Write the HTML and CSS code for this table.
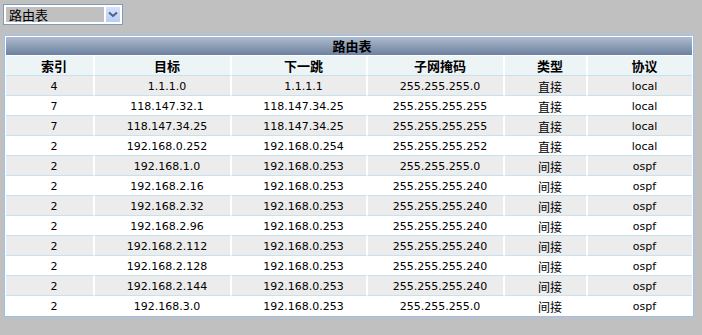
FILE: index.html
```html
<!DOCTYPE html>
<html lang="zh-CN">
<head>
<meta charset="utf-8">
<title>路由表</title>
<link rel="stylesheet" href="styles.css">
</head>
<body>
<div class="select">
  <span class="select-value">路由表</span>
  <span class="select-btn">
    <svg width="10" height="7" viewBox="0 0 10 7"><path d="M1 1.5 L5 5 L9 1.5" fill="none" stroke="#4d6185" stroke-width="2"/></svg>
  </span>
</div>
<div class="panel">
  <table class="routes">
    <colgroup>
      <col class="c1"><col class="c2"><col class="c3"><col class="c4"><col class="c5"><col class="c6">
    </colgroup>
    <thead>
      <tr><th colspan="6" class="title">路由表</th></tr>
      <tr class="cols"><th>索引</th><th>目标</th><th>下一跳</th><th>子网掩码</th><th>类型</th><th>协议</th></tr>
    </thead>
    <tbody>
      <tr><td>4</td><td>1.1.1.0</td><td>1.1.1.1</td><td>255.255.255.0</td><td class="zh">直接</td><td>local</td></tr>
      <tr><td>7</td><td>118.147.32.1</td><td>118.147.34.25</td><td>255.255.255.255</td><td class="zh">直接</td><td>local</td></tr>
      <tr><td>7</td><td>118.147.34.25</td><td>118.147.34.25</td><td>255.255.255.255</td><td class="zh">直接</td><td>local</td></tr>
      <tr><td>2</td><td>192.168.0.252</td><td>192.168.0.254</td><td>255.255.255.252</td><td class="zh">直接</td><td>local</td></tr>
      <tr><td>2</td><td>192.168.1.0</td><td>192.168.0.253</td><td>255.255.255.0</td><td class="zh">间接</td><td>ospf</td></tr>
      <tr><td>2</td><td>192.168.2.16</td><td>192.168.0.253</td><td>255.255.255.240</td><td class="zh">间接</td><td>ospf</td></tr>
      <tr><td>2</td><td>192.168.2.32</td><td>192.168.0.253</td><td>255.255.255.240</td><td class="zh">间接</td><td>ospf</td></tr>
      <tr><td>2</td><td>192.168.2.96</td><td>192.168.0.253</td><td>255.255.255.240</td><td class="zh">间接</td><td>ospf</td></tr>
      <tr><td>2</td><td>192.168.2.112</td><td>192.168.0.253</td><td>255.255.255.240</td><td class="zh">间接</td><td>ospf</td></tr>
      <tr><td>2</td><td>192.168.2.128</td><td>192.168.0.253</td><td>255.255.255.240</td><td class="zh">间接</td><td>ospf</td></tr>
      <tr><td>2</td><td>192.168.2.144</td><td>192.168.0.253</td><td>255.255.255.240</td><td class="zh">间接</td><td>ospf</td></tr>
      <tr><td>2</td><td>192.168.3.0</td><td>192.168.0.253</td><td>255.255.255.0</td><td class="zh">间接</td><td>ospf</td></tr>
    </tbody>
  </table>
</div>
</body>
</html>
```
FILE: styles.css
```css
html, body {
  margin: 0;
  background: #c0c0c0;
}
body {
  padding: 4px 0 0 3px;
  font-family: "DejaVu Sans", "Noto Sans CJK SC", sans-serif;
  font-size: 11px;
  color: #000;
}
.select {
  box-sizing: border-box;
  width: 120px;
  height: 21px;
  border: 1px solid #7f9db9;
  background: #fff;
  padding: 2px;
  display: flex;
  gap: 2px;
}
.select-value {
  flex: 1;
  background: #c0c0c0;
  font-family: "Noto Sans CJK SC", sans-serif;
  font-size: 13px;
  line-height: 15px;
  padding-left: 3px;
  color: #000;
}
.select-btn {
  width: 14px;
  background: linear-gradient(#d6e2fb, #b9cdf5);
  display: flex;
  align-items: center;
  justify-content: center;
}
.panel {
  margin: 10px 0 0 1px;
  border: 1px solid #9ac0ee;
  background: #fff;
  padding: 1px;
  box-sizing: border-box;
  width: 690px;
}
.routes {
  width: 686px;
  border-collapse: separate;
  border-spacing: 0;
  table-layout: fixed;
}
.c1 { width: 89px; }
.c2 { width: 137px; }
.c3 { width: 136px; }
.c4 { width: 137px; }
.c5 { width: 83px; }
.c6 { width: 104px; }
.title {
  height: 18px;
  padding: 0 0 0 6px;
  background: linear-gradient(#adbbcd, #6c819f);
  font-family: "Noto Sans CJK SC", sans-serif;
  font-size: 13px;
  font-weight: bold;
  color: #000;
  line-height: 18px;
  border-bottom: 1px solid #fff;
}
.cols th {
  height: 19px;
  padding: 0 0 0 9px;
  background: #edf4f6;
  font-family: "Noto Sans CJK SC", sans-serif;
  font-size: 13px;
  font-weight: bold;
  color: #000;
  line-height: 19px;
  border-bottom: 1px solid #c6e2ee;
  border-right: 2px solid #fff;
}
.cols th:last-child, .routes td:last-child {
  border-right: none;
}
.routes td {
  height: 17px;
  padding: 2px 0 0 9px;
  text-align: center;
  line-height: 17px;
  border-bottom: 1px solid #c6e2ee;
  border-right: 2px solid #fff;
  white-space: nowrap;
}
.routes tbody tr:nth-child(odd) td {
  background: #ececec;
}
.routes tbody tr:nth-child(even) td {
  background: #fff;
}
.routes tbody tr:last-child td {
  border-bottom: none;
}
.zh {
  font-family: "Noto Sans CJK SC", sans-serif;
  font-size: 12px;
}
```
